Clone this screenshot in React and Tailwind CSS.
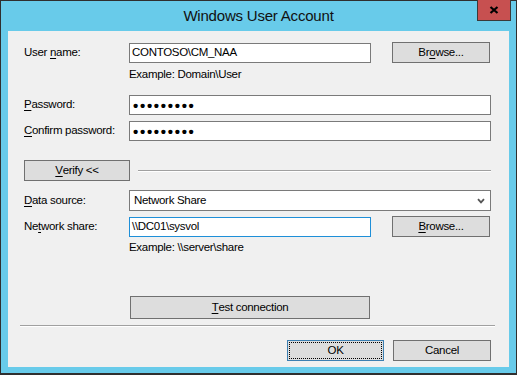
const font = "font-['Liberation_Sans',Arial,sans-serif]"
const txt = 'text-[11.5px] tracking-[-0.3px]'

function U({ children }) {
  return <span className="underline underline-offset-[1.5px]">{children}</span>
}

function Label({ before, mnemonic, after }) {
  return (
    <span className={`w-[105px] shrink-0 text-black ${txt}`}>
      {before}
      <U>{mnemonic}</U>
      {after}
    </span>
  )
}

function Button({ className = '', children }) {
  return (
    <div
      className={`flex items-center justify-center border border-[#707070] bg-[#dddddd] text-black ${txt} ${className}`}
    >
      {children}
    </div>
  )
}

function Separator({ className = '' }) {
  return (
    <div className={`flex flex-col ${className}`}>
      <div className="h-px bg-[#a0a0a0]" />
      <div className="h-px bg-white" />
    </div>
  )
}

function Dots() {
  return (
    <div className="flex-1 h-[20px] border border-[#7a7a7a] bg-white flex items-center px-[3px] text-[15px] leading-none tracking-[1.7px] font-bold">
      •••••••••
    </div>
  )
}

export default function App() {
  return (
    <div className={`w-[517px] h-[375px] bg-[#68cbea] border border-b-2 border-[#2f2f2f] flex flex-col ${font}`}>
      {/* title bar */}
      <div className="relative h-[30px] shrink-0 flex items-center justify-center">
        <span className="text-[15px] tracking-[-0.2px] text-[#111] pt-[1px]">Windows User Account</span>
        <div className="absolute right-[5px] top-[-1px] w-[34px] h-[21px] bg-[#c75050] border border-[#3a3a3a] border-t-0 flex items-center justify-center">
          <svg width="10" height="8" viewBox="0 0 10 8">
            <path d="M1.5 1 L8.5 7 M8.5 1 L1.5 7" stroke="#000" strokeWidth="2.2" />
          </svg>
        </div>
      </div>

      {/* client area */}
      <div className="ml-[7px] w-[501px] h-[336px] bg-[#f0f0f0] flex flex-col pl-[16px] pr-[18px]">
        <div className="mt-[11px] h-[21px] flex items-center">
          <Label before="User " mnemonic="n" after="ame:" />
          <div className={`w-[242px] h-[20px] border border-[#7a7a7a] bg-white flex items-center px-[2px] ${txt}`}>
            CONTOSO\CM_NAA
          </div>
          <Button className="ml-[21px] w-[98px] h-[21px]">
            Br<U>o</U>wse...
          </Button>
        </div>
        <div className={`mt-[4px] ml-[105px] h-[14px] leading-[14px] text-black ${txt}`}>
          Example: Domain\User
        </div>

        <div className="mt-[14px] h-[20px] flex items-center">
          <Label before="" mnemonic="P" after="assword:" />
          <Dots />
        </div>
        <div className="mt-[6px] h-[20px] flex items-center">
          <Label before="" mnemonic="C" after="onfirm password:" />
          <Dots />
        </div>

        <div className="mt-[19px] h-[21px] flex items-center">
          <Button className="w-[106px] h-[21px]">
            <U>V</U>erify &lt;&lt;
          </Button>
          <Separator className="ml-[8px] flex-1" />
        </div>

        <div className="mt-[9px] h-[21px] flex items-center">
          <Label before="" mnemonic="D" after="ata source:" />
          <div className={`flex-1 h-[21px] border border-[#7a7a7a] bg-white flex items-center justify-between pl-[4px] pr-[5px] ${txt}`}>
            <span>Network Share</span>
            <svg width="8" height="6" viewBox="0 0 8 6">
              <path d="M1 1.2 L4 4.4 L7 1.2" stroke="#555" strokeWidth="1.8" fill="none" />
            </svg>
          </div>
        </div>

        <div className="mt-[5px] h-[21px] flex items-center">
          <Label before="Ne" mnemonic="t" after="work share:" />
          <div className={`w-[242px] h-[20px] mt-[1px] border border-[#1e8fd8] bg-white flex items-center px-[2px] ${txt}`}>
            \\DC01\sysvol
          </div>
          <Button className="ml-[21px] w-[98px] h-[21px]">
            <U>B</U>rowse...
          </Button>
        </div>
        <div className={`mt-[3px] ml-[105px] h-[14px] leading-[14px] text-black ${txt}`}>
          {'Example: \\\\server\\share'}
        </div>

        <Button className="mt-[42px] ml-[106px] w-[240px] h-[23px]">
          <U>T</U>est connection
        </Button>

        <Separator className="mt-[6px] -ml-[4px] mr-[-4px]" />

        <div className="mt-[13px] flex justify-end gap-[9px]">
          <div className="w-[97px] h-[21px] border border-[#3c7fb1] bg-[#dddddd] p-px">
            <div className={`w-full h-full border border-dotted border-black flex items-center justify-center ${txt}`}>
              OK
            </div>
          </div>
          <Button className="w-[98px] h-[21px]">Cancel</Button>
        </div>
      </div>
    </div>
  )
}
